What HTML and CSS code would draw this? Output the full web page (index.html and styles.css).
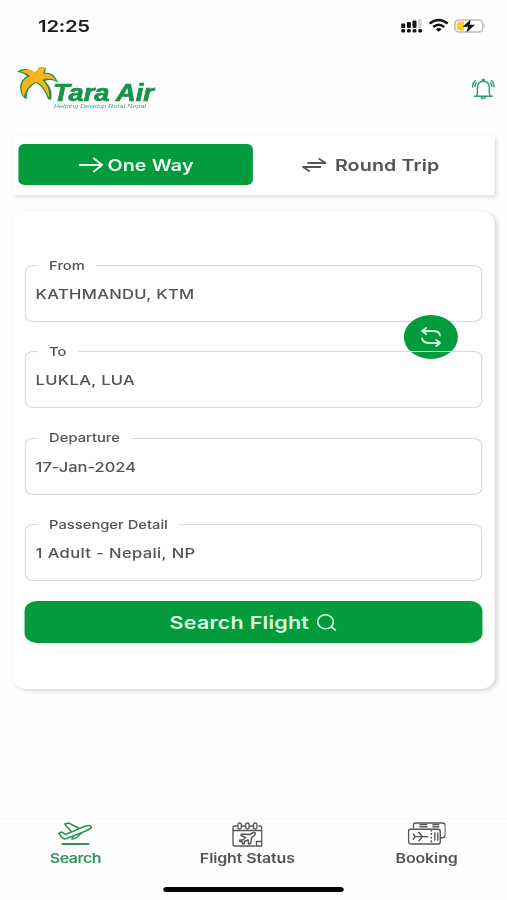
FILE: index.html
```html
<!DOCTYPE html>
<html lang="en">
<head>
<meta charset="utf-8">
<title>Tara Air</title>
<link rel="stylesheet" href="styles.css">
</head>
<body>
<div class="screen">
  <div class="status">
    <span class="clock">12:25</span>
    <svg class="status-icons" viewBox="0 0 86 18" preserveAspectRatio="none">
      <g fill="#111"><rect x="1" y="6.500" width="4" height="4.500" rx="1"/><rect x="6.700" y="5" width="4" height="6" rx="1"/><rect x="12.300" y="3.500" width="4" height="7.500" rx="1"/><rect x="1" y="12" width="4" height="3.500" rx="1.500"/><rect x="6.700" y="12" width="4" height="3.500" rx="1.500"/><rect x="12.300" y="12" width="4" height="3.500" rx="1.500"/><rect x="18" y="12" width="4" height="3.500" rx="1.500"/></g>
      <rect x="18" y="2" width="3.500" height="9" rx="1" fill="#d3d3d3"/>
      <g fill="none" stroke="#111" stroke-width="2.600"><path d="M29.500 6.500Q38.500-.5 47.500 6.500M33 10Q38.500 5.500 44 10"/></g>
      <path d="M35.500 12.200Q38.500 10 41.500 12.200L38.500 14.800Z" fill="#111"/>
      <rect x="54.700" y="3" width="28" height="12" rx="4" fill="#fff" stroke="#bcbcbc" stroke-width="1.600"/>
      <path d="M59 4.600h5v8.800h-5q-2.500 0-2.500-2.500V7q0-2.400 2.500-2.400Z" fill="#fbce2b"/>
      <path d="M84.300 7q2 2 0 4Z" fill="#bbb"/>
      <path d="M70.500 2.500 62.500 9.800h5.500l-2 6 9-8h-5.500Z" fill="#111"/>
    </svg>
  </div>
  <header class="header">
    <svg class="logo" viewBox="0 0 142 46" preserveAspectRatio="none">
      <path d="M19 7C13 2 6 2 1 6c3 0 6 1 10 4C3 15 2 24 8 32l3 1c-1-8 3-13 9-16 5 2 9 8 12 16l3 1c2-8-1-14-6-19 5-2 9-1 13 2-2-7-7-11-13-10l1-5-6-1Z" fill="#179447"/>
      <path d="M20 7C16 3 9 3 4 6c4 0 8 2 10 4-8 3-11 12-6 21 2-8 6-13 12-15 6 2 10 8 13 16 1-8-2-14-7-18 4-2 10-2 14 1-3-6-8-8-13-7l2-6-6-1Z" fill="#fbb41d"/>
      <text x="37" y="35.500" class="logo-name" textLength="101" lengthAdjust="spacingAndGlyphs">Tara Air</text>
      <text x="38" y="42.500" class="logo-tag" textLength="92" lengthAdjust="spacingAndGlyphs">Helping Develop Rural Nepal</text>
    </svg>
    <svg class="bell" viewBox="0 0 24 22" preserveAspectRatio="none" fill="none" stroke="#35a077" stroke-width="1.500" stroke-linecap="round" stroke-linejoin="round"><path d="M3 18.200h18M5 18l1-2.500V10q0-6.500 6-6.700 6 .2 6 6.700v5.500L19 18M11 3v-1.500h2V3M9.500 18.500q2.500 4 5 0M1.300 9Q1 5 4 2.500M3.500 8.500Q3.400 6.500 5 4.800M22.700 9Q23 5 20 2.500M20.500 8.500Q20.600 6.500 19 4.800"/></svg>
  </header>
  <main class="main">
    <div class="tabs">
      <div class="tab active">
        <svg class="arrow" viewBox="0 0 24 16" preserveAspectRatio="none" fill="none" stroke="#e9fff0" stroke-width="2" stroke-linecap="round" stroke-linejoin="round"><path d="M1 8h22M15 1.500 23 8l-8 6.500"/></svg>
        <span>One Way</span>
      </div>
      <div class="tab">
        <svg class="arrow" viewBox="0 0 24 16" preserveAspectRatio="none" fill="none" stroke="#555" stroke-width="1.900" stroke-linecap="round" stroke-linejoin="round"><path d="M6 6h17l-6-4M18 10H1l6 4"/></svg>
        <span>Round Trip</span>
      </div>
    </div>
    <section class="card">
      <fieldset class="field from"><legend>From</legend>KATHMANDU, KTM</fieldset>
      <div class="swap"><svg viewBox="0 0 20 22" preserveAspectRatio="none" fill="none" stroke="#d9ffe3" stroke-width="1.800" stroke-linecap="round" stroke-linejoin="round"><path d="M5 2 1 5l4 3M1.500 5H12q6 0 7 4.500M1 12.500q1 4.500 7 4.500h10.500M15 14l4 3-4 3"/></svg></div>
      <fieldset class="field"><legend>To</legend>LUKLA, LUA</fieldset>
      <fieldset class="field date"><legend>Departure</legend>17-Jan-2024</fieldset>
      <fieldset class="field passenger"><legend>Passenger Detail</legend>1 Adult - Nepali, NP</fieldset>
      <div class="search">
        <span>Search Flight</span>
        <svg viewBox="0 0 20 17" preserveAspectRatio="none" fill="none" stroke="#d9ffe3" stroke-width="1.600" stroke-linecap="round"><ellipse cx="9" cy="7.800" rx="8" ry="7"/><path d="m15 13 4 3"/></svg>
      </div>
    </section>
  </main>
  <nav class="nav">
    <div class="item current">
      <svg class="plane" viewBox="0 0 36 24" preserveAspectRatio="none" fill="none" stroke="#2f9459" stroke-width="1.600" stroke-linejoin="round"><path d="M1 11.500 4 10l4 2.500 6-2.700L7 2l4-1 11 5.500L28 4q6-1.500 6 1-.5 2-5 3.800L9 16.500q-3 1-4.500-1ZM14 10l8-3.500M16 13.500 14.500 17l4-1 7-6"/><path d="M4 22h28" stroke-width="2.200"/></svg>
      <span>Search</span>
    </div>
    <div class="item">
      <svg class="calendar" viewBox="0 0 32 26" preserveAspectRatio="none" fill="none" stroke="#555" stroke-width="1.400" stroke-linejoin="round"><path d="M5 4H3Q1 4 1 6v16q0 2 2 2h21M30.500 19V6q0-2-2-2H27M1 8.500h29.500M25 19.500h5.500V24H25Z"/><g fill="#fff"><rect x="6" y="1" width="3.500" height="6" rx="1.700"/><rect x="14" y="1" width="3.500" height="6" rx="1.700"/><rect x="22" y="1" width="3.500" height="6" rx="1.700"/></g><path d="M9.500 4H14M17.500 4H22M22 10.500l-4 2-8-.5-1 1.500 5 2-3 2.500H8l-.5 1 3 1 .5 2 1.500-.5v-2l4-1.500.5 4 2-.5 1-5.500 3.500-3.500q1-2-1-2Z"/></svg>
      <span>Flight Status</span>
    </div>
    <div class="item">
      <svg class="ticket" viewBox="0 0 39 22" preserveAspectRatio="none" fill="none" stroke="#555" stroke-width="1.400" stroke-linejoin="round"><path d="M6 6V3q0-2 2-2h27q3 0 3 2v10q0 2-3 2h-2"/><path d="M12 2.500h8M12 4.500h8M25 2.500h7M25 4.500h7"/><rect x="1" y="7" width="32" height="14" rx="2" fill="#fff"/><path d="M24 7v14" stroke-dasharray="2 1.500"/><path d="M27.500 10v8M30.500 10v8M5.500 11l2 3-2 3M7 14h14M15 14l-4-4.500M15 14l-4 4.500"/></svg>
      <span>Booking</span>
    </div>
  </nav>
  <div class="home"></div>
</div>
</body>
</html>
```

FILE: styles.css
```css
* { box-sizing: border-box; }
body { margin: 0; width: 507px; height: 900px; overflow: hidden; background: #fefefe; }
/* Portrait layout 413px wide, stretched to fill the window. */
.screen {
  width: 413px; height: 900px; display: flex; flex-direction: column;
  transform: scaleX(1.2276); transform-origin: 0 0;
  font-family: Inter, "Open Sans", sans-serif; color: #535353;
}
.screen svg { display: block; flex: none; }
.status { height: 52px; padding: 0 17px 0 31px; display: flex; align-items: center; justify-content: space-between; }
.clock { font-size: 16.5px; font-weight: 600; letter-spacing: -.2px; color: #1a1a1a; }
.status-icons { width: 70px; height: 18px; }
.header { height: 83px; padding: 14px 10px 0 13px; display: flex; justify-content: space-between; }
.logo { width: 115.7px; height: 46px; }
.logo-name { font: italic bold 23px "Liberation Sans", sans-serif; fill: #179447; stroke: #179447; stroke-width: .7px; }
.logo-tag { font: italic 6px "Liberation Sans", sans-serif; fill: #4ca96c; }
.bell { width: 19.5px; height: 22px; margin-top: 12px; }
.main { padding: 0 10px; }
.tabs { height: 60px; padding: 9px 5.5px 10px 5px; display: flex; background: #fff; box-shadow: 2px 2px 4px #0002, 0 0 3px #00000008; }
.tab { flex: 1; display: flex; align-items: center; justify-content: center; gap: 4px; border-radius: 5px; font-size: 16px; font-weight: 600; letter-spacing: .12px; }
.tab + .tab { gap: 7px; }
.tab.active { background: #039b3b; color: #e9fff0; }
.arrow { width: 20px; height: 16px; }
.card { position: relative; height: 478px; margin-top: 16px; padding: 46.5px 10.5px 0 10px; border-radius: 12px; background: #fff; box-shadow: 2px 2px 4px #0002, 0 0 3px #0000000a; }
.field { position: relative; z-index: 1; height: 64.5px; margin: 0 0 21.9px; padding: 12.5px 8px 0; border: 1px solid #d9d9d9; border-radius: 7px; font-size: 13.5px; font-weight: 500; line-height: 17px; letter-spacing: .25px; }
.field.from { z-index: 0; }
.field.date { letter-spacing: -.05px; }
.field.passenger { letter-spacing: .3px; }
.field legend { margin-left: 2px; padding: 0 9px; font-size: 12px; line-height: 16px; letter-spacing: 0; }
.swap { position: absolute; left: 319px; top: 104px; width: 44px; height: 44px; border-radius: 50%; background: #039b3b; display: flex; align-items: center; justify-content: center; }
.swap svg { width: 16.5px; height: 22px; }
.search { height: 42px; margin-top: -2px; padding-top: 1px; border-radius: 10px; background: #039b3b; color: #d9ffe3; display: flex; align-items: center; justify-content: center; gap: 6.5px; font-size: 17.5px; font-weight: 600; letter-spacing: .2px; }
.search svg { width: 16px; height: 17px; }
.nav { height: 61px; margin-top: 129px; padding-top: 3px; border-top: 1px solid #f8f8f8; display: grid; grid-template-columns: 123px 157px 135px; }
.item { display: flex; flex-direction: column; align-items: center; font-size: 13px; font-weight: 600; line-height: 17px; letter-spacing: -.1px; }
.item svg { height: 26px; margin-bottom: 1px; }
.item span { margin-top: auto; margin-bottom: 12px; }
.item:first-child span { letter-spacing: -.4px; }
.current { color: #36935b; }
.item .plane { width: 29px; height: 24px; }
.item .calendar { width: 25.500px; }
.item .ticket { width: 31.500px; height: 23px; }
.home { width: 147px; height: 5px; margin: 8px 0 0 133px; border-radius: 3px; background: #050505; }
```
